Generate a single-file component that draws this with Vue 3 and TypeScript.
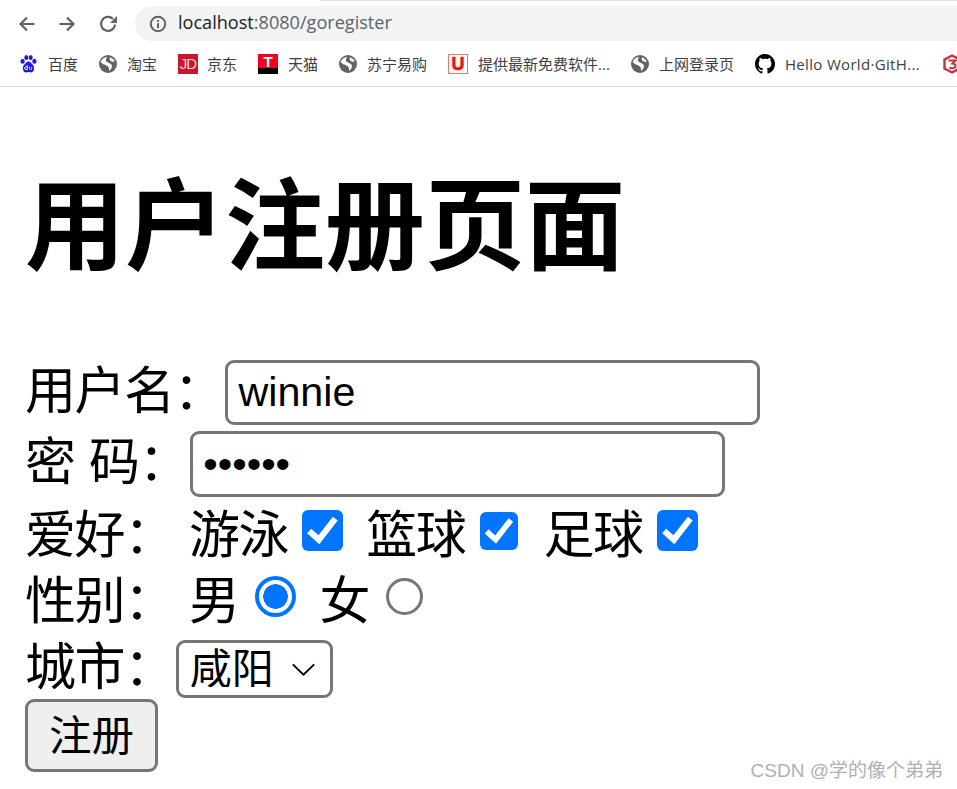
<script setup lang="ts">
interface Bookmark { icon: string; label: string }
const bookmarks: Bookmark[] = [
  { icon: 'baidu', label: '百度' },
  { icon: 'globe', label: '淘宝' },
  { icon: 'jd', label: '京东' },
  { icon: 'tmall', label: '天猫' },
  { icon: 'globe', label: '苏宁易购' },
  { icon: 'u', label: '提供最新免费软件...' },
  { icon: 'globe', label: '上网登录页' },
  { icon: 'github', label: 'Hello World·GitH...' },
  { icon: 'cube', label: '' },
]
</script>

<template>
  <div class="page">
    <header class="chrome">
      <div class="toolbar">
        <svg class="nav" viewBox="0 0 20 20"><path d="M17.500 10H4M10 3.500 3.500 10l6.500 6.500" /></svg>
        <svg class="nav" viewBox="0 0 20 20"><path d="M2.500 10H16M10 3.500 16.500 10 10 16.500" /></svg>
        <svg class="nav" viewBox="0 0 20 20"><path d="M18 10.500A7 7 0 1 1 16 5" /><path class="fill" d="M20 2v7h-7z" /></svg>
        <div class="address">
          <svg class="info" viewBox="0 0 18 18"><circle cx="9" cy="9" r="7.200" /><path d="M9 8.200v4.800M9 5v1.800" /></svg>
          <span class="url"><b>localhost</b>:8080/goregister</span>
        </div>
      </div>
      <nav class="bookmarks">
        <div v-for="b in bookmarks" :key="b.label + b.icon" class="bookmark">
          <svg v-if="b.icon === 'baidu'" class="bm bm-baidu" viewBox="0 0 17 18">
            <ellipse cx="2.600" cy="6.300" rx="2.100" ry="2.500" fill="#2319dc" />
            <ellipse cx="6.300" cy="2.500" rx="2" ry="2.500" fill="#2319dc" />
            <ellipse cx="10.700" cy="2.500" rx="2" ry="2.500" fill="#2319dc" />
            <ellipse cx="14.400" cy="6.300" rx="2.100" ry="2.500" fill="#2319dc" />
            <path d="M8.500 6.500c2.200 0 2.800 2.200 4.500 3.400 2 1.700 1.400 7.600-2.400 7.600-1 0-1.300-.4-2.100-.4s-1.100.4-2.100.4C2.600 17.500 2 11.600 4 9.900 5.700 8.700 6.300 6.500 8.500 6.500z" fill="#2319dc" />
            <path d="M7.300 10.300v4.200H5.900c-1.700 0-1.700-2.700 0-2.700h1.400M9.500 11.800v1.900c0 1 2.200 1 2.200 0v-1.900" stroke="#fff" stroke-width=".9" fill="none" />
          </svg>
          <svg v-else-if="b.icon === 'globe'" class="bm bm-globe" viewBox="0 0 18 18">
            <circle cx="9" cy="9" r="9" fill="#5f6368" />
            <path d="M1.600 6.800C3 3.500 5.500 2 8.500 1.900 7 3.200 6.500 4.800 7.200 6.200 8.500 8 12 7.800 12.800 10.300 13.400 12.500 12 14.500 10 16.100 10.500 13.500 9.600 11.500 7.500 10.500 5.500 9.500 3 9.200 1.600 6.800zM11 2.300c2.300.6 3.900 2.400 4.700 4.200-1.600.6-3.300.2-4.300-.7-.8-.9-.9-2.300-.4-3.500z" fill="#fff" />
          </svg>
          <div v-else-if="b.icon === 'jd'" class="bm bm-jd">JD</div>
          <div v-else-if="b.icon === 'tmall'" class="bm bm-tmall"><span>T</span></div>
          <div v-else-if="b.icon === 'u'" class="bm bm-u"><span>U</span></div>
          <svg v-else-if="b.icon === 'github'" class="bm bm-github" viewBox="0 0 16 16">
            <path fill="#000" d="M8 0C3.580 0 0 3.580 0 8c0 3.540 2.290 6.530 5.470 7.590.4.070.55-.17.55-.38 0-.19-.01-.82-.01-1.490-2.010.37-2.530-.49-2.690-.94-.09-.23-.48-.94-.82-1.130-.28-.15-.68-.52-.01-.53.63-.01 1.080.58 1.230.82.72 1.210 1.870.87 2.330.66.070-.52.28-.87.51-1.070-1.780-.2-3.640-.89-3.640-3.950 0-.87.31-1.590.82-2.150-.08-.2-.36-1.020.08-2.120 0 0 .67-.21 2.200.82.64-.18 1.320-.27 2-.27.68 0 1.360.09 2 .27 1.530-1.040 2.200-.82 2.200-.82.44 1.100.16 1.920.08 2.120.51.56.82 1.270.82 2.150 0 3.070-1.870 3.750-3.650 3.950.29.25.54.73.54 1.480 0 1.070-.01 1.930-.01 2.200 0 .21.15.46.55.38A8.013 8.013 0 0 0 16 8c0-4.420-3.580-8-8-8z" />
          </svg>
          <svg v-else class="bm bm-cube" viewBox="0 0 18 20">
            <path d="M9 1.500 16.500 5.500v9L9 18.500 1.500 14.500v-9z" fill="none" stroke="#c9313d" stroke-width="2.400" />
            <path d="M5.500 6.500h7l-3 3c2.500 0 3 1.500 3 2.500 0 2-3 3-6 1.500" fill="none" stroke="#c9313d" stroke-width="2" />
          </svg>
          <span v-if="b.label" class="bm-label" :class="{ 'bm-wide': b.icon === 'github' }">{{ b.label }}</span>
        </div>
      </nav>
    </header>

    <main class="content">
      <h1 class="title">用户注册页面</h1>
      <form class="form" @submit.prevent>
        <div class="row row-user">
          <label class="cap">用户名：</label>
          <input class="text" type="text" value="winnie" />
        </div>
        <div class="row row-pass">
          <label class="cap cap-spaced">密 码：</label>
          <input class="text" type="password" value="123456" />
        </div>
        <div class="row row-hobby">
          <label class="cap field">爱好：</label>
          <span class="cap">游泳</span><input class="cb" type="checkbox" checked />
          <span class="cap opt-2">篮球</span><input class="cb cb-small" type="checkbox" checked />
          <span class="cap opt-3">足球</span><input class="cb cb-last" type="checkbox" checked />
        </div>
        <div class="row row-gender">
          <label class="cap field">性别：</label>
          <span class="cap">男</span><input class="rb" type="radio" name="g" checked />
          <span class="cap opt-f">女</span><input class="rb rb-small" type="radio" name="g" />
        </div>
        <div class="row row-city">
          <label class="cap">城市：</label>
          <div class="select-wrap">
            <select class="select"><option>咸阳</option></select>
            <svg class="chev" viewBox="0 0 26 14"><path d="M1.500 1.500 13 12.500 24.500 1.500" /></svg>
          </div>
        </div>
        <div class="row row-btn">
          <button class="btn" type="submit">注册</button>
        </div>
      </form>
    </main>
    <div class="watermark">CSDN @学的像个弟弟</div>
  </div>
</template>

<style>
html, body { margin: 0; background: #fff; overflow: hidden; }
</style>

<style scoped>
.page {
  position: relative;
  width: 957px;
  height: 789px;
  overflow: hidden;
  color: #000;
  font-family: "Liberation Sans", "Noto Sans CJK SC", sans-serif;
}
.chrome {
  position: relative;
  height: 86px;
  border-bottom: 1px solid #dadce0;
  box-sizing: content-box;
  font-family: "Open Sans", "Noto Sans CJK SC", sans-serif;
}
.chrome::before {
  content: "";
  position: absolute;
  top: 0;
  left: 320px;
  right: 0;
  height: 1px;
  background: #dee1e6;
}
.toolbar {
  height: 41px;
  padding: 6px 0 0 17px;
  box-sizing: border-box;
  display: flex;
  align-items: stretch;
}
.nav {
  width: 20px;
  height: 20px;
  align-self: center;
  margin-right: 20px;
  fill: none;
  stroke: #5f6368;
  stroke-width: 2.200;
}
.nav .fill { fill: #5f6368; stroke: none; }
.address {
  flex: 1;
  margin-left: -2px;
  background: #f1f3f4;
  border-radius: 18px 0 0 18px;
  display: flex;
  align-items: center;
  padding-left: 14px;
}
.info { width: 18px; height: 18px; fill: none; stroke: #5f6368; stroke-width: 2; }
.url { margin-left: 11px; font-size: 18.100px; line-height: 33px; padding-bottom: 2px; color: #5f6368; white-space: nowrap; }
.url b { font-weight: 400; color: #202124; }
.bookmarks {
  height: 45px;
  display: flex;
  align-items: center;
  padding-left: 20px;
  gap: 21px;
  white-space: nowrap;
}
.bookmark { display: flex; align-items: center; gap: 10px; flex: none; }
.bm-label { font-size: 15px; color: #3c4043; line-height: 20px; }
.bm-wide { letter-spacing: .33px; margin-right: 2px; }
.bm { flex: none; }
.bm-baidu { width: 17px; height: 18px; margin-right: 1px; }
.bm-globe { width: 18px; height: 18px; }
.bm-jd {
  width: 20px; height: 20px; margin-right: -1px; background: #c8162a; color: #f5d3d7;
  font: 400 15px/20px "Liberation Sans", sans-serif; text-align: center; letter-spacing: -1px;
}
.bm-tmall {
  width: 20px; height: 20px; background: linear-gradient(#f0001e 0 70%, #000 70%);
  color: #fff; font: 700 15px/15px "Liberation Sans", sans-serif; text-align: center;
}
.bm-u {
  width: 20px; height: 20px; box-sizing: border-box; border: 1px solid #f4736b; background: #fff;
  color: #f01408; font: 900 18px/18px "Liberation Sans", sans-serif; text-align: center; overflow: hidden;
  -webkit-text-stroke: .6px #f01408;
}
.bm-github { width: 20px; height: 20px; }
.bm-cube { width: 18px; height: 20px; }

.content { padding: 0 25px; }
.title {
  margin: 0;
  padding-top: 62px;
  height: 269px;
  box-sizing: border-box;
  font: 700 100px/140px "Noto Sans CJK SC", sans-serif;
  white-space: nowrap;
}
.form {
  font: 400 51px/1 "Noto Sans CJK SC", sans-serif;
  letter-spacing: -1.400px;
  display: flex;
  flex-direction: column;
}
.row { display: flex; align-items: center; white-space: pre; }
.cap { flex: none; padding-bottom: 8px; }
.row-user .cap { padding-bottom: 10px; }
.row-pass .cap { padding-bottom: 12px; }
.row-hobby .cap { padding-bottom: 5px; }
.cap-spaced { word-spacing: 4.500px; }
.field { width: 164px; }
.row-user { height: 72px; }
.row-pass { height: 72px; }
.row-hobby { height: 67px; }
.row-gender { height: 68px; }
.row-city { height: 64px; }
.row-btn { height: 73px; }
.text {
  box-sizing: border-box;
  width: 535px;
  height: 65px;
  margin-left: 2px;
  border: 3px solid #767676;
  border-radius: 9px;
  padding: 0 10px;
  background: #fff;
  color: #000;
  font: 41.300px "Liberation Sans", sans-serif;
  outline: none;
}
.row-pass .text { height: 66px; }
.cb {
  appearance: none;
  flex: none;
  width: 41px;
  height: 41px;
  margin: 0 0 6px 14px;
  border-radius: 6px;
  background: #0075ff url("data:image/svg+xml,%3Csvg xmlns='http://www.w3.org/2000/svg' viewBox='0 0 40 40'%3E%3Cpath d='M7 20.500 16.500 29 32.500 8.500' fill='none' stroke='%23fff' stroke-width='6'/%3E%3C/svg%3E") center / 100% 100% no-repeat;
}
.cb-small { width: 38px; height: 38px; margin-left: 15px; }
.cb-last { margin-left: 14px; }
.opt-2 { margin-left: 23px; }
.opt-3 { margin-left: 25px; }
.rb {
  appearance: none;
  flex: none;
  box-sizing: border-box;
  width: 41px;
  height: 41px;
  margin: 0 0 10px 16px;
  border: 4px solid #0075ff;
  border-radius: 50%;
  background: radial-gradient(circle, #0075ff 0 12px, #fff 12.500px);
}
.rb-small {
  width: 37px;
  height: 37px;
  margin-left: 17px;
  border: 3px solid #767676;
  background: #fff;
}
.opt-f { margin-left: 24px; }
.select-wrap { position: relative; margin: 4px 0 0 2px; width: 157px; height: 58px; }
.select {
  display: block;
  appearance: none;
  box-sizing: border-box;
  width: 157px;
  height: 58px;
  border: 3px solid #767676;
  border-radius: 9px;
  background: #fff;
  color: #000;
  padding: 0 0 8px 11px;
  font: 42px/45px "Noto Sans CJK SC", sans-serif;
  outline: none;
}
.chev {
  position: absolute;
  right: 17px;
  top: 23px;
  width: 25px;
  height: 13px;
  fill: none;
  stroke: #000;
  stroke-width: 2;
  pointer-events: none;
}
.btn {
  box-sizing: border-box;
  width: 133px;
  height: 73px;
  border: 3px solid #767676;
  border-radius: 9px;
  background: #efefef;
  color: #000;
  padding: 0 0 6px;
  font: 42.500px "Noto Sans CJK SC", sans-serif;
}
.watermark {
  position: absolute;
  right: 14px;
  bottom: 7px;
  font: 19px "Liberation Sans", "Noto Sans CJK SC", sans-serif;
  color: #b0b0b0;
  white-space: nowrap;
}
</style>
